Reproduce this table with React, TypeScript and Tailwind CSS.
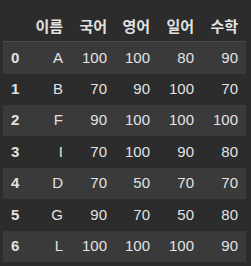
import React from "react";

const rows = [
  ["0", "A", "100", "100", "80", "90"],
  ["1", "B", "70", "90", "100", "70"],
  ["2", "F", "90", "100", "100", "100"],
  ["3", "I", "70", "100", "90", "80"],
  ["4", "D", "70", "50", "70", "70"],
  ["5", "G", "90", "70", "50", "80"],
  ["6", "L", "100", "100", "100", "90"],
];
const heights = ["h-[32px]", "h-[31px]", "h-[31px]", "h-[32px]", "h-[31px]", "h-[32px]", "h-[31px]"];
const widths = ["w-[23px]", "w-[45px]", "w-[44px]", "w-[43px]", "w-[44px]", "w-[44px]"];
const headers = ["", "이름", "국어", "영어", "일어", "수학"];

export default function App() {
  return (
    <div
      className="w-[251px] h-[266px] bg-[#2c2c2c] text-[#e2e2e2] text-[15px] pl-[3px]"
      style={{ fontFamily: '"Liberation Sans", "Noto Sans CJK KR", sans-serif' }}
    >
      <div className="flex h-[42px] items-center pt-[14px] border-b border-[#4a4a4a] w-[243px] font-bold">
        {headers.map((h, i) => (
          <div key={i} className={`${widths[i]} text-right pr-[8px]`}>
            {h}
          </div>
        ))}
      </div>
      {rows.map((r, ri) => (
        <div
          key={ri}
          className={`flex items-center w-[243px] ${heights[ri]} ${ri % 2 === 0 ? "bg-[#3a3a3a]" : ""}`}
        >
          {r.map((c, ci) => (
            <div
              key={ci}
              className={`${widths[ci]} ${ci === 0 ? "text-left pl-[8px] font-bold" : "text-right pr-[8px]"}`}
            >
              {c}
            </div>
          ))}
        </div>
      ))}
    </div>
  );
}
